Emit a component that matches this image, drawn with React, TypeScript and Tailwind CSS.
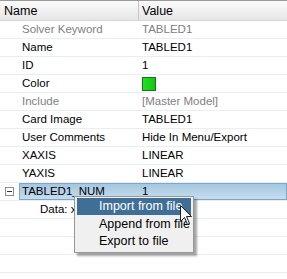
import React from "react";

const rows: { name: string; value: string; gray?: boolean; color?: boolean }[] = [
  { name: "Solver Keyword", value: "TABLED1", gray: true },
  { name: "Name", value: "TABLED1" },
  { name: "ID", value: "1" },
  { name: "Color", value: "", color: true },
  { name: "Include", value: "[Master Model]", gray: true },
  { name: "Card Image", value: "TABLED1" },
  { name: "User Comments", value: "Hide In Menu/Export" },
  { name: "XAXIS", value: "LINEAR" },
  { name: "YAXIS", value: "LINEAR" },
];

export default function App() {
  return (
    <div
      className="relative w-[287px] h-[279px] overflow-hidden bg-white text-[11.5px] text-black"
      style={{ fontFamily: "Tahoma, 'Liberation Sans', Arial, sans-serif" }}
    >
      {/* header */}
      <div className="flex h-[21px] border-t border-[#9a9a9a] border-b border-b-[#d5d5d5] bg-gradient-to-b from-[#fbfbfb] to-[#e6e6e6] text-[12.5px]">
        <div className="w-[139px] pl-[4px] pt-[2px] flex items-center border-r border-[#c8c8c8]">Name</div>
        <div className="flex-1 pl-[3px] pt-[2px] flex items-center">Value</div>
      </div>
      {rows.map((r) => (
        <div key={r.name} className="flex h-[18px] border-b border-[#e6eff3]">
          <div className={`w-[139px] pl-[22px] flex items-center ${r.gray ? "text-[#808080]" : ""}`}>{r.name}</div>
          <div className={`flex-1 pl-[3px] flex items-center ${r.gray ? "text-[#808080]" : ""}`}>
            {r.color ? (
              <div className="w-[14px] h-[14px] border border-[#1f6f1f] bg-gradient-to-r from-[#22e022] to-[#10c810]" />
            ) : (
              r.value
            )}
          </div>
        </div>
      ))}
      {/* selected row */}
      <div className="flex h-[18px] border-b border-[#e6eff3]">
        <div className="w-[19px] flex items-center justify-center">
          <div className="w-[9px] h-[9px] border border-[#8c8c8c] bg-white flex items-center justify-center">
            <div className="w-[5px] h-px bg-[#333]" />
          </div>
        </div>
        <div className="flex-1 flex border border-[#7ea6c6] bg-gradient-to-b from-[#a4c7df] to-[#c6ddee]">
          <div className="w-[119px] pl-[2px] flex items-center">TABLED1_NUM</div>
          <div className="flex-1 pl-[3px] flex items-center">1</div>
        </div>
      </div>
      <div className="flex h-[18px] border-b border-[#e6eff3]">
        <div className="pl-[40px] flex items-center">Data: x</div>
      </div>
      <div className="h-[18px] border-b border-[#e6eff3]" />
      <div className="h-[18px] border-b border-[#e6eff3]" />
      <div className="h-[18px] border-b border-[#e6eff3]" />
      <div className="h-[18px] border-b border-[#e6eff3]" />

      {/* context menu */}
      <div className="absolute left-[74px] top-[196px] w-[120px] border border-[#979797] bg-[#f0f0f0] pt-[1px] pb-[2px] text-[12.5px] shadow-[3px_3px_2px_rgba(0,0,0,0.35)]">
        <div className="mx-[2px] h-[17px] bg-[#3f6f96] text-white pl-[22px] flex items-center">Import from file</div>
        <div className="mx-[2px] h-[18px] pl-[22px] flex items-center">Append from file</div>
        <div className="mx-[2px] h-[17px] pl-[22px] flex items-center">Export to file</div>
      </div>

      {/* cursor */}
      <svg className="absolute left-[180px] top-[205px]" width="13" height="21" viewBox="0 0 13 21">
        <path
          d="M0.5 0.5 L0.5 16.5 L4.5 12.5 L7.5 19.5 L9.5 18.5 L6.5 11.5 L11.5 11.5 Z"
          fill="white"
          stroke="#202020"
          strokeWidth="1"
          strokeLinejoin="miter"
        />
      </svg>
    </div>
  );
}
